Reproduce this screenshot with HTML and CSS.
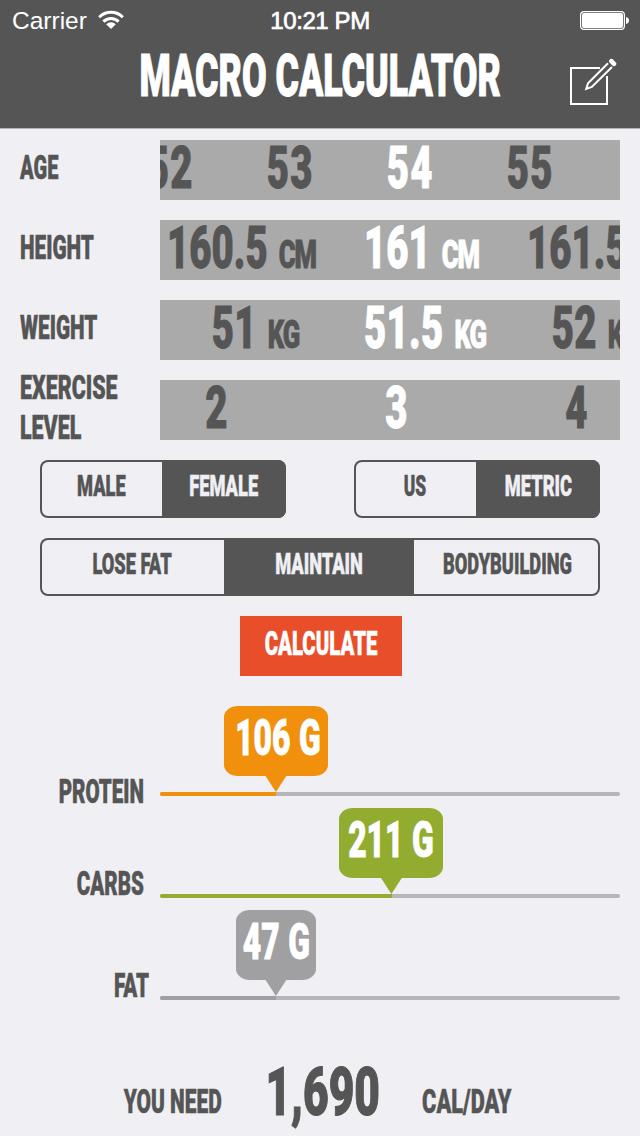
FILE: index.html
```
<!DOCTYPE html>
<html lang="en">
<head>
    <meta charset="UTF-8">
    <meta name="viewport" content="width=device-width, initial-scale=1.0">
    <title>Macro Calculator</title>
    <link rel="stylesheet" href="styles.css">
</head>
<body>
    <header>
        <div class="status-bar">
            <div class="carrier">
                <span>Carrier</span>
                <svg width="26" height="20" viewBox="0 0 26 20" fill="none" stroke="#fff" stroke-width="3">
                    <path d="M1.2 7.2a16.5 16.5 0 0 1 23.6 0"/>
                    <path d="M5.4 11.6a10.7 10.7 0 0 1 15.2 0"/>
                    <path d="M13 19L8.2 14.2a6.8 6.8 0 0 1 9.6 0z" fill="#fff" stroke="none"/>
                </svg>
            </div>
            <div class="time">10:21 PM</div>
            <div class="battery">
                <svg width="50" height="20" viewBox="0 0 50 20">
                    <rect x="0.6" y="0.6" width="43.8" height="17.8" rx="3.4" fill="none" stroke="#fff" stroke-width="1.2"/>
                    <rect x="2" y="2" width="41" height="15" rx="2" fill="#fff"/>
                    <path d="M46 6c2 .4 3 1.6 3 3.5s-1 3.1-3 3.5z" fill="#fff"/>
                </svg>
            </div>
        </div>
        <div class="title-bar">
            <h1><span class="text">Macro Calculator</span></h1>
            <svg class="edit" width="50" height="50" viewBox="0 0 50 50" fill="none" stroke="#fff" stroke-width="2">
                <path d="M33 11H4v36h36V19"/>
                <path d="M41 6.200L21 26.200 19.200 32l5.600-2L45 10"/>
                <path d="M44.400 4.200l2.600 2.600" stroke-width="4.600" stroke-linecap="round"/>
            </svg>
        </div>
    </header>

    <main>
        <!-- Pickers -->
        <div class="row">
            <div class="label"><span class="text age">Age</span></div>
            <div class="picker pick-age">
                <div class="item"><span class="text">52</span></div>
                <div class="item"><span class="text">53</span></div>
                <div class="item selected"><span class="text">54</span></div>
                <div class="item"><span class="text">55</span></div>
            </div>
        </div>
        <div class="row">
            <div class="label"><span class="text height">Height</span></div>
            <div class="picker pick-height">
                <div class="item"><span class="text">160.5<small>cm</small></span></div>
                <div class="item selected"><span class="text">161<small>cm</small></span></div>
                <div class="item"><span class="text">161.5<small>cm</small></span></div>
            </div>
        </div>
        <div class="row">
            <div class="label"><span class="text weight">Weight</span></div>
            <div class="picker pick-weight">
                <div class="item"><span class="text">51<small>kg</small></span></div>
                <div class="item selected"><span class="text">51.5<small>kg</small></span></div>
                <div class="item"><span class="text">52<small>kg</small></span></div>
            </div>
        </div>
        <div class="row">
            <div class="label"><span class="text">Exercise</span><span class="text">Level</span></div>
            <div class="picker pick-level">
                <div class="item"><span class="text">2</span></div>
                <div class="item selected"><span class="text">3</span></div>
                <div class="item"><span class="text">4</span></div>
            </div>
        </div>

        <!-- Options -->
        <div class="options">
            <div class="segments two">
                <button><span class="text">Male</span></button>
                <button class="active"><span class="text">Female</span></button>
            </div>
            <div class="segments two">
                <button><span class="text us">US</span></button>
                <button class="active"><span class="text">Metric</span></button>
            </div>
        </div>
        <div class="segments three">
            <button><span class="text">Lose fat</span></button>
            <button class="active"><span class="text">Maintain</span></button>
            <button><span class="text">Bodybuilding</span></button>
        </div>
        <button class="calculate"><span class="text">Calculate</span></button>

        <!-- Results -->
        <div class="results">
            <div class="result protein">
                <div class="name"><span class="text">Protein</span></div>
                <div class="slider">
                    <div class="bubble" style="left: 25.2%"><span class="text">106 g</span></div>
                    <div class="track"><div class="fill" style="width: 25.2%"></div></div>
                </div>
            </div>
            <div class="result carbs">
                <div class="name"><span class="text">Carbs</span></div>
                <div class="slider">
                    <div class="bubble" style="left: 50.3%"><span class="text">211 g</span></div>
                    <div class="track"><div class="fill" style="width: 50.4%"></div></div>
                </div>
            </div>
            <div class="result fat">
                <div class="name"><span class="text">Fat</span></div>
                <div class="slider">
                    <div class="bubble" style="left: 25.2%"><span class="text">47 g</span></div>
                    <div class="track"><div class="fill" style="width: 25.2%"></div></div>
                </div>
            </div>
        </div>
    </main>

    <footer>
        <div class="need"><span class="text">You need</span></div>
        <div class="total"><span class="text">1,690</span></div>
        <div class="unit"><span class="text">cal/day</span></div>
    </footer>
</body>
</html>
```
FILE: styles.css
```
* {
    box-sizing: border-box;
}
body {
    font-family: Roboto, "Liberation Sans", sans-serif;
    margin: 0;
    width: 640px;
    height: 1136px;
    overflow: hidden;
    background-color: #efeff4;
    color: #555;
}
button {
    font-family: inherit;
    border: none;
    background: none;
    padding: 0;
    color: inherit;
}
/* condensed capitals */
.text {
    --fit: 0.63;
    display: block;
    flex: none;
    font-weight: 900;
    text-transform: uppercase;
    white-space: nowrap;
    transform: scaleX(var(--fit));
    -webkit-text-stroke: 0.5px currentColor;
}

header {
    height: 129px;
    background-color: #555;
    border-bottom: 1px solid #b4b4b7;
    color: white;
}
.status-bar {
    display: grid;
    grid-template-columns: 1fr 120px 1fr;
    height: 40px;
    font: 24px/42px "Liberation Sans", sans-serif;
}
.carrier {
    display: flex;
    padding-left: 12px;
    gap: 11px;
    font-size: 24.5px;
}
.carrier svg {
    margin-top: 10px;
}
.time {
    text-align: center;
    letter-spacing: -0.4px;
    -webkit-text-stroke: 0.7px white;
}
.battery {
    display: flex;
    justify-content: flex-end;
    padding: 11px 10px 0 0;
}
.title-bar {
    display: flex;
    height: 88px;
    padding-left: 73px;
}
h1 {
    display: flex;
    justify-content: center;
    flex: none;
    width: 494px;
    margin: 0;
    font-size: 59px;
    line-height: 72px;
}
h1 .text {
    --fit: 0.606;
    -webkit-text-stroke-width: 1px;
}
.edit {
    flex: none;
    margin-top: 17px;
}

main {
    padding: 11px 20px 0;
}
.row {
    display: flex;
    height: 60px;
    margin-bottom: 20px;
}
.label {
    display: flex;
    flex-direction: column;
    justify-content: center;
    flex: none;
    width: 140px;
    margin: -11px 0 -4px;
    font-size: 34px;
    line-height: 40px;
}
.label .text {
    transform-origin: left;
}
.label .age {
    --fit: 0.59;
}
.label .height, .label .weight {
    --fit: 0.61;
}
.picker {
    display: flex;
    flex: 1;
    min-width: 0;
    overflow-x: clip;
    background-color: #aaa;
    font-size: 59px;
    line-height: 56px;
}
.item {
    display: flex;
    justify-content: center;
    flex: none;
    width: 180px;
}
.item .text {
    --fit: 0.65;
    letter-spacing: 2px;
    -webkit-text-stroke-width: 0.9px;
}
.item small {
    font-size: 39.5px;
    letter-spacing: -1.5px;
    margin-left: 17px;
}
.item.selected {
    color: white;
}
.pick-age .item {
    width: 120px;
}
.pick-age .item:first-child {
    margin-left: -50px;
}
.pick-height .item:first-child {
    margin-left: -8px;
}
.pick-height .text {
    letter-spacing: 0;
}
.pick-weight .item {
    width: 170px;
}
.pick-weight .item:first-child {
    margin-left: 10px;
}
.pick-weight .text {
    letter-spacing: 0.5px;
}
.pick-level .item:first-child {
    margin-left: -33px;
}

.options {
    display: flex;
    justify-content: space-between;
    margin: 0 20px 20px;
}
.segments {
    display: grid;
    height: 58px;
    border-radius: 8px;
    box-shadow: inset 0 0 0 2px #555;
    overflow: hidden;
}
.segments.two {
    grid-template-columns: 122px 124px;
}
.segments.three {
    grid-template-columns: 184px 190px 186px;
    margin: 0 20px;
}
.segments button {
    display: flex;
    justify-content: center;
    font-size: 29.5px;
    line-height: 52px;
}
.segments .text {
    --fit: 0.618;
}
.segments .active {
    background-color: #555;
    color: #efeff4;
}
.segments .us {
    --fit: 0.59;
}
.calculate {
    display: flex;
    justify-content: center;
    width: 162px;
    height: 60px;
    margin: 20px 0 0 220px;
    background-color: #e84e29;
    color: white;
    font-size: 34px;
    line-height: 55px;
}
.calculate .text {
    --fit: 0.6;
}

.results {
    margin-top: 30px;
}
.result {
    display: flex;
    align-items: flex-end;
    height: 90px;
    margin-bottom: 12px;
}
.name {
    display: flex;
    justify-content: flex-end;
    width: 140px;
    padding-right: 16px;
    margin-bottom: -5px;
    font-size: 34px;
    line-height: 40px;
}
.name .text {
    --fit: 0.605;
    transform-origin: right;
}
.protein .name {
    margin-bottom: -15px;
}
.fat .name {
    padding-right: 11px;
}
.slider {
    position: relative;
    flex: 1;
}
.track {
    height: 4px;
    border-radius: 2px;
    overflow: hidden;
    background-color: #b6b6b8;
}
.fill {
    height: 4px;
    background-color: var(--color);
}
.bubble {
    position: absolute;
    bottom: 20px;
    display: flex;
    justify-content: center;
    width: 104px;
    height: 70px;
    border-radius: 14px / 11px;
    transform: translateX(-50%);
    background-color: var(--color);
    color: white;
    font-size: 50.5px;
    line-height: 63px;
}
.bubble::after {
    content: "";
    position: absolute;
    top: 69px;
    left: calc(50% - 11px);
    width: 22px;
    height: 17px;
    background-color: var(--color);
    clip-path: polygon(0 0, 100% 0, 50% 100%);
}
.bubble .text {
    --fit: 0.63;
    word-spacing: 1px;
    -webkit-text-stroke-width: 0.9px;
}
.protein {
    --color: #f0900c;
}
.protein .bubble {
    padding-left: 3px;
}
.carbs {
    --color: #92ac30;
}
.fat {
    --color: #a0a0a2;
}
.fat .bubble {
    width: 80px;
}

footer {
    display: flex;
    margin-top: 65px;
    padding-left: 99px;
    font-size: 34px;
    line-height: 72px;
}
footer div {
    display: flex;
    justify-content: center;
}
footer .need {
    width: 147px;
}
footer .total {
    width: 153px;
    font-size: 67px;
    line-height: 55px;
}
footer .unit {
    width: 135px;
}
footer .need .text {
    --fit: 0.615;
}
footer .total .text {
    --fit: 0.66;
    -webkit-text-stroke-width: 1.2px;
}
footer .unit .text {
    --fit: 0.64;
}
```
